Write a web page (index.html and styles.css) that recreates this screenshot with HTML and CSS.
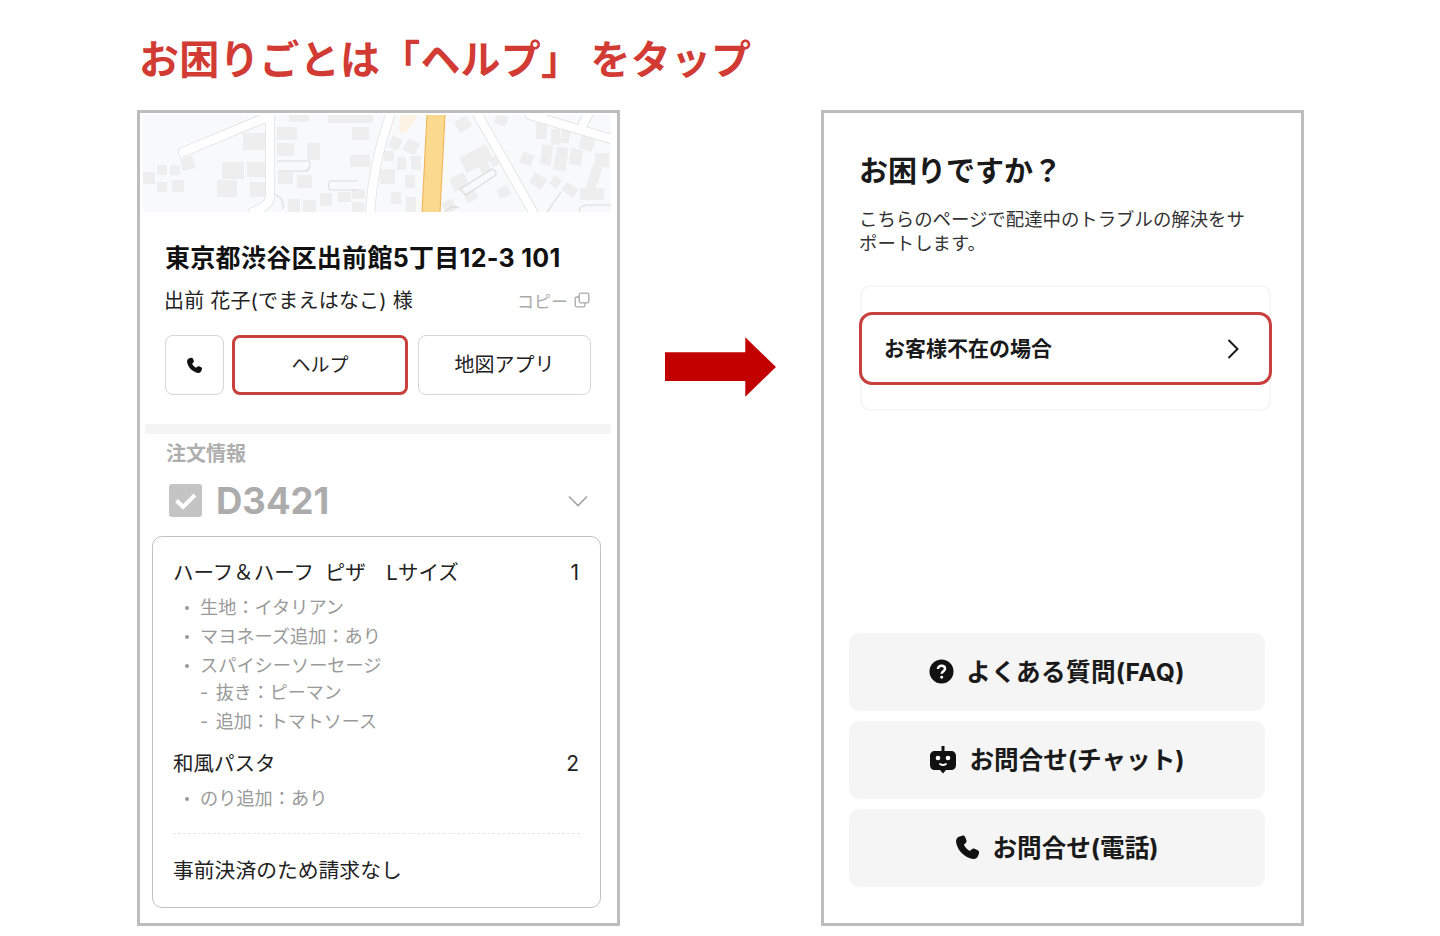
FILE: index.html
```html
<!DOCTYPE html>
<html lang="ja">
<head>
<meta charset="utf-8">
<title>お困りごとは「ヘルプ」をタップ</title>
<link rel="stylesheet" href="styles.css">
</head>
<body>
<h1 class="headline">お困りごとは「ヘルプ」 をタップ</h1>
<main class="stage">
  <section class="panel">
    <svg class="map" viewBox="0 0 468 97" aria-hidden="true">
      <g class="bld">
        <rect x="100" y="18" width="22" height="17"/><rect x="134" y="12" width="20" height="13"/><rect x="134" y="28" width="17" height="13"/><rect x="164" y="28" width="13" height="17"/><rect x="209" y="12" width="17" height="13"/><rect x="207" y="40" width="20" height="12"/><rect x="79" y="47" width="22" height="17"/><rect x="104" y="47" width="18" height="15"/><rect x="74" y="65" width="20" height="17"/><rect x="107" y="67" width="15" height="15"/><rect x="14" y="50" width="10" height="10"/><rect x="27" y="50" width="10" height="10"/><rect x="38" y="42" width="13" height="13" transform="rotate(-15 44 48)"/><rect x="0" y="57" width="12" height="12"/><rect x="14" y="67" width="10" height="10"/><rect x="29" y="65" width="12" height="12"/><rect x="135" y="57" width="15" height="12"/><rect x="154" y="60" width="15" height="13"/><rect x="145" y="84" width="12" height="13"/><rect x="160" y="85" width="13" height="12"/><rect x="177" y="78" width="12" height="13"/><rect x="195" y="77" width="13" height="10"/><rect x="209" y="74" width="13" height="10"/><rect x="209" y="87" width="12" height="10"/>
        <rect x="146" y="0" width="20" height="7"/><rect x="185" y="0" width="45" height="8"/>
        <rect x="247" y="22" width="11" height="12" transform="rotate(25 252 28)"/><rect x="262" y="25" width="13" height="13" transform="rotate(25 268 31)"/><rect x="241" y="36" width="10" height="10"/><rect x="254" y="42" width="9" height="13"/><rect x="268" y="41" width="10" height="14"/><rect x="237" y="54" width="15" height="15"/><rect x="262" y="60" width="10" height="13"/><rect x="248" y="77" width="10" height="12"/><rect x="263" y="82" width="10" height="15"/>
        <rect x="313" y="3" width="14" height="12" transform="rotate(-30 320 9)"/><rect x="318" y="35" width="30" height="17" transform="rotate(-28 333 43)"/><rect x="308" y="60" width="16" height="14" transform="rotate(-25 316 67)"/><rect x="322" y="76" width="12" height="10" transform="rotate(-25 328 81)"/><rect x="337" y="48" width="10" height="10" transform="rotate(-30 342 53)"/><rect x="347" y="42" width="9" height="9" transform="rotate(-30 351 46)"/><rect x="355" y="72" width="12" height="10" transform="rotate(-25 361 77)"/><rect x="300" y="85" width="12" height="12" transform="rotate(-25 306 91)"/><rect x="352" y="0" width="12" height="10" transform="rotate(20 358 5)"/>
        <rect x="393" y="8" width="11" height="16"/><rect x="408" y="14" width="9" height="16"/><rect x="418" y="12" width="9" height="16" transform="rotate(10 422 20)"/><rect x="398" y="30" width="11" height="20" transform="rotate(8 403 40)"/><rect x="412" y="32" width="12" height="24" transform="rotate(8 418 44)"/><rect x="427" y="34" width="12" height="16" transform="rotate(8 433 42)"/><rect x="437" y="22" width="14" height="13" transform="rotate(20 444 28)"/><rect x="378" y="38" width="12" height="12" transform="rotate(20 384 44)"/><rect x="388" y="60" width="14" height="12" transform="rotate(35 395 66)"/><rect x="408" y="62" width="9" height="10" transform="rotate(35 412 67)"/><rect x="445" y="50" width="10" height="32" transform="rotate(18 450 66)"/><rect x="452" y="38" width="14" height="14"/><rect x="420" y="70" width="14" height="10" transform="rotate(35 427 75)"/><rect x="437" y="73" width="24" height="12"/>
      </g>
      <g class="lane">
        <path d="M134 46H166q3 5-2 10H135"/><path d="M214 66H187q-3 5 0 9H214"/><path d="M128 78q14 4 12 16"/><path d="M317 74l32-20q5 2 4 6l-30 20z"/><path d="M404 97l14-20"/><path d="M436 97q0-6 8-7h24"/><path d="M302 97q6-8 14-4"/>
      </g>
      <g class="road-edge">
        <path d="M40 37 124 2M127 0V82Q127 90 110 97M247 0Q230 50 227 97M335 0 390 97M387 0 468 24M445 0 440 9"/>
      </g>
      <g class="road">
        <path d="M40 37 124 2M127 0V82Q127 90 110 97M247 0Q230 50 227 97M335 0 390 97M387 0 468 24M445 0 440 9"/>
      </g>
      <polygon class="poi" points="257,0 275,0 263,17 256,18"/>
      <polygon class="main-road" points="284,0 302,0 297,97 279,97"/>
      <path class="main-edge" d="M284 0 279 97M302 0 297 97"/>
    </svg>

    <div class="info">
      <h2 class="address">東京都渋谷区出前館5丁目12-3 101</h2>
      <div class="customer">
        <span class="customer-name">出前 花子(でまえはなこ) 様</span>
        <span class="copy">コピー
          <svg class="copy-icon" viewBox="0 0 16 16" aria-hidden="true"><rect x="5.2" y="1.2" width="9.6" height="9.6" rx="1.6"/><path d="M5.2 5H2.8Q1.2 5 1.2 6.6V13.2Q1.2 14.8 2.8 14.8H9.4Q11 14.8 11 13.2V10.8"/></svg>
        </span>
      </div>
      <div class="actions">
        <button class="action action-icon" type="button" aria-label="電話">
          <svg class="phone-small" viewBox="2 1 21 21" aria-hidden="true"><path d="M6.1 2.6 8.3 2c1-.3 1.900.2 2.300 1.100l1 2.600c.3.8.1 1.600-.5 2.200L9.600 9.300c.9 2 2.600 3.900 4.800 5l1.500-1.400c.6-.6 1.500-.8 2.300-.4l2.500 1.200c.9.400 1.300 1.400 1 2.300l-.7 2.100c-.5 1.700-2.200 3-4.100 2.600C10 19.400 4.700 14.200 3.400 7.500 3 5.100 4.100 3.200 6.100 2.600z"/></svg>
        </button>
        <button class="action action-help" type="button">ヘルプ</button>
        <button class="action action-map" type="button">地図アプリ</button>
      </div>
    </div>
    <div class="divider"></div>
    <div class="order">
      <div class="order-label">注文情報</div>
      <div class="order-head">
        <span class="check"><svg viewBox="0 0 33 33" aria-hidden="true"><path d="M7.500 16.500 14 23 26 11"/></svg></span>
        <span class="order-id">D3421</span>
        <svg class="chevron" viewBox="0 0 20 12" aria-hidden="true"><path d="M1 1.500 10 10.500 19 1.500"/></svg>
      </div>
      <div class="card">
        <div class="item-row item-first"><span>ハーフ＆ハーフ ピザ　Lサイズ</span><span class="qty">1</span></div>
        <ul class="opts">
          <li>生地：イタリアン</li>
          <li>マヨネーズ追加：あり</li>
          <li>スパイシーソーセージ</li>
          <li class="sub">- 抜き：ピーマン</li>
          <li class="sub">- 追加：トマトソース</li>
        </ul>
        <div class="item-row item-second"><span>和風パスタ</span><span class="qty">2</span></div>
        <ul class="opts">
          <li>のり追加：あり</li>
        </ul>
        <div class="card-rule"></div>
        <div class="note">事前決済のため請求なし</div>
      </div>
    </div>
  </section>

  <div class="arrow-cell">
    <svg class="arrow" viewBox="0 0 112 60" aria-hidden="true"><polygon points="0,15 81,15 81,0 112,30 81,60 81,44 0,44"/></svg>
  </div>

  <section class="panel panel-help">
    <h2 class="help-title">お困りですか？</h2>
    <p class="help-text">こちらのページで配達中のトラブルの解決をサポートします。</p>
    <div class="ghost">
      <div class="absent"><span class="absent-label">お客様不在の場合</span>
        <svg class="next" viewBox="0 0 12 20" aria-hidden="true"><path d="M1.500 1 10.500 10 1.500 19"/></svg>
      </div>
    </div>
    <div class="contact-list">
      <button class="contact" type="button">
        <svg class="ci ci-q" viewBox="0 0 26 26" aria-hidden="true"><circle cx="13" cy="13" r="12.500"/><path class="q-mark" d="M9.300 10.300c0-2 1.600-3.300 3.700-3.300s3.700 1.300 3.700 3.100c0 2.600-3.500 2.700-3.500 5.300"/><circle class="q-dot" cx="13.200" cy="19" r="1.500"/></svg>
        <span class="contact-label contact-faq">よくある質問(FAQ)</span>
      </button>
      <button class="contact" type="button">
        <svg class="ci ci-bot" viewBox="0 0 28 28" aria-hidden="true"><path d="M12.500 0h3v5H22c3 0 5 2 5 5v9c0 3-2 5-5 5h-5l-3 3.500L11 24H6c-3 0-5-2-5-5v-9c0-3 2-5 5-5h6.500z"/><circle class="bot-face" cx="9" cy="12" r="2.300"/><circle class="bot-face" cx="19" cy="12" r="2.300"/><path class="bot-smile" d="M11 18q3 2 6 0"/></svg>
        <span class="contact-label">お問合せ(チャット)</span>
      </button>
      <button class="contact" type="button">
        <svg class="ci ci-phone" viewBox="2.500 1.500 20 20" aria-hidden="true"><path d="M6.100 2.600 8.300 2c1-.3 1.900.2 2.300 1.100l1 2.600c.3.8.1 1.600-.5 2.200L9.600 9.300c.9 2 2.600 3.900 4.800 5l1.500-1.400c.6-.6 1.500-.8 2.300-.4l2.500 1.200c.9.400 1.300 1.400 1 2.300l-.7 2.100c-.5 1.700-2.200 3-4.100 2.600C10 19.400 4.700 14.200 3.400 7.500 3 5.100 4.100 3.200 6.100 2.600z"/></svg>
        <span class="contact-label">お問合せ(電話)</span>
      </button>
    </div>
  </section>
</main>
</body>
</html>
```

FILE: styles.css
```css
* { box-sizing: border-box; }
html, body { margin: 0; padding: 0; background: #fff; }
body {
  width: 1440px;
  height: 936px;
  overflow: hidden;
  font-family: Inter, "Noto Sans CJK JP", sans-serif;
  color: #1a1a1a;
}
h1, h2, p, ul { margin: 0; padding: 0; }
button { font: inherit; color: inherit; background: none; padding: 0; }

.headline {
  height: 110px;
  padding: 31px 0 0 139px;
  font-family: "Noto Sans CJK JP", sans-serif;
  font-size: 40px;
  line-height: 52px;
  font-weight: 700;
  color: #d13b34;
  letter-spacing: .2px;
  white-space: nowrap;
}

.stage {
  display: grid;
  grid-template-columns: 483px 201px 483px;
  height: 816px;
  padding-left: 137px;
}
.panel {
  border: 3px solid #bdbdbd;
  background: #fff;
  height: 816px;
  overflow: hidden;
}

/* map */
.map { display: block; width: 468px; height: 97px; margin: 2px 0 0 3px; background: #f8f9fa; filter: blur(.5px); }
.bld rect { fill: #eeeeef; }
.lane path { fill: none; stroke: #dcdcdc; stroke-width: 1.200; }
.road-edge path { fill: none; stroke: #e0e0e0; stroke-width: 10; stroke-linecap: round; }
.road path { fill: none; stroke: #fff; stroke-width: 8.500; stroke-linecap: round; }
.poi { fill: #fdf3e4; }
.main-road { fill: #fbd98e; }
.main-edge { fill: none; stroke: #f2b04e; stroke-width: 1; }

/* address */
.info { padding: 30px 26px 0 25px; }
.address {
  font-size: 25px;
  line-height: 32px;
  font-weight: 700;
  letter-spacing: .3px;
  color: #111;
  white-space: nowrap;
}
.customer {
  display: flex;
  justify-content: space-between;
  align-items: center;
  margin-top: 13px;
  height: 28px;
}
.customer-name { font-size: 20px; line-height: 28px; letter-spacing: .2px; margin-left: -1px; color: #222; white-space: nowrap; }
.copy { display: flex; align-items: center; gap: 6px; font-size: 17px; margin-right: 1px; padding-bottom: 2px; color: #a9a9a9; }
.copy-icon { width: 16px; height: 16px; fill: none; stroke: #a9a9a9; stroke-width: 1.300; }

.actions { display: flex; align-items: stretch; margin-top: 20px; height: 60px; }
.action {
  border: 1px solid #d6d6d6;
  border-radius: 8px;
  background: #fff;
  padding-bottom: 3px;
  font-size: 19px;
  color: #222;
}
.action-icon { width: 59px; margin-right: 8px; padding-bottom: 0; display: flex; align-items: center; justify-content: center; }
.phone-small { width: 17px; height: 17px; fill: #111; }
.action-help { width: 176px; border: 3px solid #c8403e; margin-right: 10px; }
.action-map { width: 173px; font-size: 20px; }

.divider { height: 10px; margin: 29px 6px 0 5px; background: #f4f4f4; }

/* order */
.order { padding: 0 16px 0 12px; }
.order-label { margin: 7px 0 0 14px; font-size: 20px; line-height: 26px; font-weight: 700; color: #aeaeae; }
.order-head { display: flex; align-items: center; height: 48px; margin-top: 9px; padding-left: 17px; }
.check { width: 33px; height: 33px; border-radius: 3px; background: #c4c4c4; }
.check svg { display: block; width: 33px; height: 33px; fill: none; stroke: #fff; stroke-width: 4; }
.order-id { margin-left: 14px; padding-top: 2px; font-size: 36.500px; font-weight: 700; color: #acacac; line-height: 48px; }
.chevron { width: 20px; height: 12px; margin: 2px 13px 0 auto; fill: none; stroke: #a3a3a3; stroke-width: 1.600; }

.card {
  height: 372px;
  margin-top: 12px;
  border: 1px solid #c2c2c2;
  border-radius: 10px;
  padding: 21px 20px 0 20px;
}
.item-row { display: flex; justify-content: space-between; font-size: 20.500px; line-height: 30px; color: #222; white-space: nowrap; }
.item-first { word-spacing: 5px; }
.qty { font-size: 21px; padding-right: 1px; word-spacing: 0; }
.item-second { margin-top: 12px; }
.opts { list-style: none; margin-top: 5px; }
.opts li {
  position: relative;
  padding-left: 27px;
  font-size: 18.200px;
  line-height: 28.800px;
  color: #9a9a9a;
  white-space: nowrap;
}
.opts li::before {
  content: "";
  position: absolute;
  left: 12px;
  top: 13px;
  width: 4px;
  height: 4px;
  border-radius: 50%;
  background: #9a9a9a;
}
.opts li.sub { word-spacing: 2.500px; font-size: 18px; }
.opts li.sub::before { display: none; }
.card-rule { margin-top: 20px; border-top: 1px dashed #e6e6e6; }
.note { margin-top: 22px; font-size: 20.800px; line-height: 30px; color: #222; white-space: nowrap; }

/* arrow */
.arrow-cell { padding: 227px 0 0 45px; }
.arrow { display: block; width: 111px; height: 60px; fill: #c30000; }

/* help panel */
.panel-help { display: flex; flex-direction: column; padding: 0 0 36px 25px; position: relative; }
.help-title { margin-top: 40px; margin-left: 10px; font-size: 29px; line-height: 38px; font-weight: 700; color: #1a1a1a; }
.help-text { margin: 16px 55px 0 10px; font-size: 18.400px; line-height: 24px; color: #333; }
.ghost {
  flex: none;
  width: 411px;
  height: 126px;
  margin: 30px 0 0 11px;
  padding-top: 25px;
  border: 2px solid #f6f6f6;
  border-radius: 10px;
}
.absent {
  display: flex;
  align-items: center;
  justify-content: space-between;
  height: 73px;
  margin: 0 -3px 0 -3px;
  padding: 0 30px 0 22px;
  background: #fff;
  border: 3px solid #c8403e;
  border-radius: 13px;
  font-size: 21px;
  font-weight: 700;
  color: #1a1a1a;
}
.absent-label { padding-bottom: 3px; }
.next { width: 12px; height: 20px; fill: none; stroke: #1a1a1a; stroke-width: 2; }
.contact-list { margin-top: auto; display: flex; flex-direction: column; gap: 10px; width: 416px; }
.contact {
  display: flex;
  align-items: center;
  justify-content: center;
  gap: 12px;
  height: 78px;
  border: 0;
  border-radius: 10px;
  background: #f5f5f5;
  font-size: 24.600px;
  font-weight: 700;
  color: #1a1a1a;
}
.contact-label { padding-bottom: 5px; }
.contact-faq { letter-spacing: .35px; }
.ci { display: block; width: 25px; height: 25px; margin-bottom: 1px; fill: #111; }
.ci-bot { width: 28px; height: 28px; }
.q-mark { fill: none; stroke: #fff; stroke-width: 2.600; }
.q-dot, .bot-face { fill: #fff; }
.bot-smile { fill: none; stroke: #fff; stroke-width: 1.800; stroke-linecap: round; }
```
